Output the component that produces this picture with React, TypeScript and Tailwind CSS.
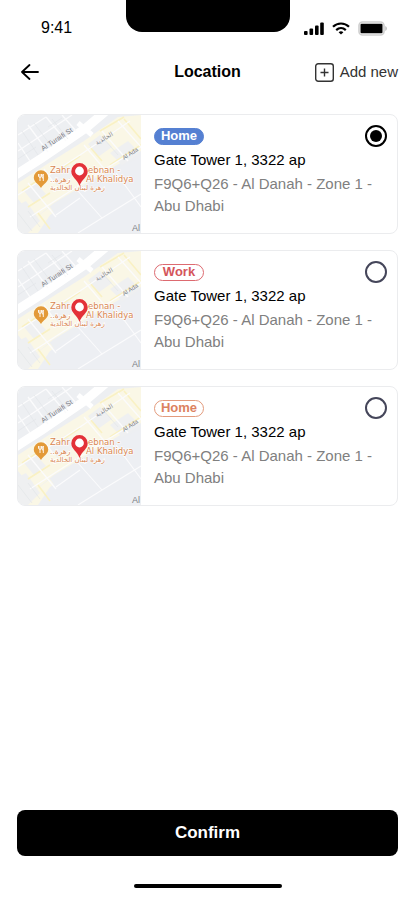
import { useState } from "react";
import clsx from "clsx";

const addresses = [
    { id: "home-1", tag: "Home", tagClass: "border-[#5580d2] bg-[#5580d2] text-white", title: "Gate Tower 1, 3322 ap", detail: "F9Q6+Q26 - Al Danah - Zone 1 - Abu Dhabi" },
    { id: "work", tag: "Work", tagClass: "border-[#dd6a70] text-[#d4555b]", title: "Gate Tower 1, 3322 ap", detail: "F9Q6+Q26 - Al Danah - Zone 1 - Abu Dhabi" },
    { id: "home-2", tag: "Home", tagClass: "border-[#e39b7d] text-[#dc8260]", title: "Gate Tower 1, 3322 ap", detail: "F9Q6+Q26 - Al Danah - Zone 1 - Abu Dhabi" },
];

function StatusBar() {
    return (
        <div className="grid h-14 grid-cols-[1fr_164px_1fr]">
            <span className="self-center pl-[41px] text-base font-medium">9:41</span>
            <div className="h-8 rounded-b-2xl bg-black" />
            <div className="flex items-center justify-end gap-2 pr-7">
                <svg width="20" height="13" viewBox="0 0 20 13" aria-hidden="true">
                    <rect x="0" y="9" width="3.6" height="4" rx="1" />
                    <rect x="5.5" y="6.5" width="3.6" height="6.5" rx="1" />
                    <rect x="11" y="3.5" width="3.6" height="9.5" rx="1" />
                    <rect x="16.2" y="0.5" width="3.6" height="12.5" rx="1" />
                </svg>
                <svg width="18" height="13" viewBox="0 0 18 13" fill="none" stroke="#000" strokeWidth="2.2" aria-hidden="true">
                    <path d="M1 4.8C5.5 .4 12.5 .4 17 4.8" />
                    <path d="M4.2 8.1c2.800-2.600 6.800-2.600 9.600 0" />
                    <path d="M9 12.6 6.600 10.200c1.400-1.200 3.400-1.200 4.800 0z" fill="#000" stroke="none" />
                </svg>
                <svg width="29" height="15" viewBox="0 0 29 15" aria-hidden="true">
                    <rect x="1" y="1" width="25" height="13" rx="3.5" fill="#fff" stroke="#cfcfcf" strokeWidth="1.6" />
                    <rect x="2.5" y="2.8" width="22" height="9.400" rx="1" />
                    <path d="M27.300 5v5c1-.5 1.500-1.400 1.500-2.500S28.300 5.500 27.300 5z" fill="#bbb" />
                </svg>
            </div>
        </div>
    );
}

function MapPreview() {
    return (
        <svg className="w-[123px] shrink-0" viewBox="0 0 123 118" preserveAspectRatio="xMidYMid slice" role="img" aria-label="Map">
            <rect width="123" height="118" fill="#edeff2" />

            {/* Yellow commercial blocks */}
            <g fill="#faf7e6">
                <path d="M0 68 34 46 66 26 100 2l23-2v36L92 54 66 70 36 88 16 104 0 84z" />
                <path d="m16 104 16-12 12 18-8 8H8z" />
            </g>
            <g fill="#eff0f1">
                <path d="m70 29 12-9 12 12-14 10zM92 38l18-12 12 12-18 12zM30 60l18-12 10 11-18 12zM6 76l12-8 10 11-12 9z" />
                <path d="M0 90 8 86 22 106 10 118H0z" />
            </g>
            <path d="M32 100 92 58 123 42v76H20z" fill="#edeff3" />
            <g fill="none" stroke="#f9f1c4" strokeWidth="1.6">
                <path d="m38 57 24-16M82 16l24-14M4 76l18-12M10 92l22-14M20 98l12 16M72 32l12 14M106 4l17 20M92 50 123 30" />
            </g>

            {/* Avenue running between the residential blocks */}
            <path d="M-4 61 24 43 68 13 88-4" fill="none" stroke="#fff" strokeWidth="9" />
            <path d="M60 8 74 20" stroke="#fff" strokeWidth="5" />

            {/* Side streets */}
            <g fill="none" stroke="#fbfbfc" strokeWidth="1.3">
                <path d="M0 20 28 2M0 36 30 16 54 0M10 10l20 27M28 2l20 24M44 0l14 16M0 28l12 18" />
                <path d="M0 80 62 40 112 6M12 102 74 62 123 32" />
                <path d="M26 54 36 68M66 30l22 26M84 16l26 30M100 6l23 26M10 68l28 34" />
                <path d="M60 76 84 103M98 58l25 34M84 103l39-24M84 103l-24 15M38 100l24-17" strokeWidth="1.1" />
            </g>
            <g fill="none" stroke="#e1e4e8" strokeWidth=".6">
                <path d="M4 16 20 40M16 8l18 24M34 4l16 20M0 44l18-12M30 12l14-9M0 98l14 18M10 96l12 16M86 24l14 16" />
            </g>

            {/* Street names */}
            <g fill="#7c8087" fontFamily="'Liberation Sans', 'DejaVu Sans', sans-serif" fontSize="7">
                <text x="25" y="36" transform="rotate(-33 25 36)">Al Turaifi St</text>
                <text x="79" y="30" transform="rotate(-31 79 30)" fontSize="6" direction="ltr">الخالدية</text>
                <text x="106" y="45" transform="rotate(-33 106 45)" fontSize="6">Al Ada</text>
                <text x="114" y="116" fontSize="9">Al</text>
            </g>

            {/* Restaurant label */}
            <g fill="#d98650" stroke="#fff" strokeWidth="1.2" paintOrder="stroke" fontFamily="'DejaVu Sans', sans-serif" fontSize="8.5">
                <text x="32" y="58">Zahr</text>
                <text x="70" y="58">ebnan -</text>
                <text x="32" y="67" fontSize="7.5" direction="ltr">..زهرة</text>
                <text x="68" y="67">Al Khalidya</text>
                <text x="32" y="75" fontSize="7" direction="ltr">زهرة لبنان الخالدية</text>
            </g>
            <path d="M23 73c-2.500-4.500-7.200-5.500-7.200-10.500a7.200 7.200 0 0 1 14.400 0c0 5-4.700 6-7.200 10.500z" fill="#e39a38" />
            <path d="M20.500 59v2.500c0 1 3 1 3 0V59M22 59v7M25.300 66v-7c-1 1-1.300 2.500-1 4h1" fill="none" stroke="#fff" strokeWidth=".9" />

            {/* Selected place */}
            <path d="M61.500 71c-2-7-8.200-8.500-8.200-14.800a8.200 8.200 0 0 1 16.400 0c0 6.300-6.200 7.800-8.200 14.800z" fill="#e33138" />
            <circle cx="61.500" cy="56" r="4.400" fill="#fff" />
        </svg>
    );
}

function AddressCard({ address, checked, onSelect }: { address: (typeof addresses)[number]; checked: boolean; onSelect: () => void }) {
    return (
        <label className="flex cursor-pointer overflow-hidden rounded-lg border border-[#ebecee] bg-white">
            <MapPreview />
            <div className="min-w-0 flex-1 pt-[10px] pr-[10px] pb-[15px] pl-[13px] text-[15px] leading-[22px]">
                <div className="flex items-center justify-between">
                    <span className={clsx("flex h-[17px] w-[50px] items-center justify-center rounded-full border text-[13px] font-bold", address.tagClass)}>{address.tag}</span>
                    <input
                        type="radio"
                        name="address"
                        checked={checked}
                        onChange={onSelect}
                        className="grid size-[22px] appearance-none place-content-center rounded-full border-2 border-[#45465a] checked:border-black checked:before:size-3 checked:before:rounded-full checked:before:bg-black checked:before:content-['']"
                    />
                </div>
                <p className="mt-0.5 text-black">{address.title}</p>
                <p className="mt-0.5 text-[#808080]">{address.detail}</p>
            </div>
        </label>
    );
}

export default function App() {
    const [selected, setSelected] = useState("home-1");

    return (
        <div className="flex min-h-screen flex-col bg-white font-['Liberation_Sans',Arial,sans-serif] text-black">
            <StatusBar />

            {/* Header */}
            <header className="grid h-8 grid-cols-[1fr_auto_1fr] items-center px-[17px]">
                <button type="button" aria-label="Back" className="w-6 pl-1">
                    <svg width="18" height="16" viewBox="0 0 18 16" fill="none" stroke="#000" strokeWidth="1.8" strokeLinecap="round" strokeLinejoin="round" aria-hidden="true">
                        <path d="M17 8H1M8.500 1 1 8l7.500 7" />
                    </svg>
                </button>
                <h1 className="text-base font-bold">Location</h1>
                <button type="button" className="flex items-center gap-1.5 justify-self-end text-[15px] text-[#333]">
                    <svg width="19" height="19" viewBox="0 0 19 19" fill="none" stroke="#333" strokeWidth="1.4" aria-hidden="true">
                        <rect x=".7" y=".7" width="17.600" height="17.600" rx="2.500" />
                        <path d="M9.500 5.500v8M5.500 9.500h8" />
                    </svg>
                    Add new
                </button>
            </header>

            <main className="mt-[26px] flex flex-col gap-4 px-[17px]">
                {addresses.map((address) => (
                    <AddressCard key={address.id} address={address} checked={selected === address.id} onSelect={() => setSelected(address.id)} />
                ))}
            </main>

            {/* Footer */}
            <footer className="mt-auto flex flex-col items-center gap-7 px-[17px] pb-3">
                <button type="button" className="h-[46px] w-full rounded-lg bg-black text-[17px] font-bold text-white">
                    Confirm
                </button>
                <div className="h-1 w-[148px] rounded-full bg-black" />
            </footer>
        </div>
    );
}
